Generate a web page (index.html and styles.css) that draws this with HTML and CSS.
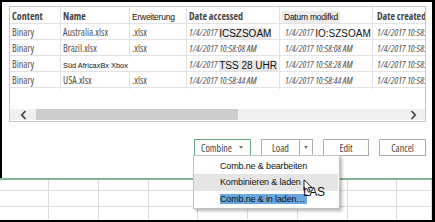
FILE: index.html
```html
<!DOCTYPE html>
<html>
<head>
<meta charset="utf-8">
<link rel="stylesheet" href="styles.css">
</head>
<body>
<div class="frame">
  <div class="dialog">
    <div class="box">
      <div class="row head">
        <div class="c">Content</div>
        <div class="c">Name</div>
        <div class="c"><span class="arial8">Erweiterung</span></div>
        <div class="c">Date accessed</div>
        <div class="c c5"><span class="arial8 hl">Datum modifkd</span></div>
        <div class="c c6">Date created</div>
      </div>
      <div class="row">
        <div class="c">Binary</div>
        <div class="c">Australia.xlsx</div>
        <div class="c">.xlsx</div>
        <div class="c it">1/4/2017 <span class="ov grey">ICSZSOAM</span></div>
        <div class="c c5 it">1/4/2017 <span class="ov">IO:SZSOAM</span></div>
        <div class="c c6 it">1/4/2017 10:58:00 AM</div>
      </div>
      <div class="row">
        <div class="c">Binary</div>
        <div class="c">Brazil.xlsx</div>
        <div class="c">.xlsx</div>
        <div class="c it">1/4/2017 10:58:08 AM</div>
        <div class="c c5 it">1/4/2017 10:58:08 AM</div>
        <div class="c c6 it">1/4/2017 10:58:08 AM</div>
      </div>
      <div class="row">
        <div class="c">Binary</div>
        <div class="c span2"><span class="arial7">Süd AfricaxBx Xbox</span></div>
        <div class="c it">1/4/2017 <span class="ov grey">TSS 28 UHR</span></div>
        <div class="c c5 it">1/4/2017 10:58:28 AM</div>
        <div class="c c6 it">1/4/2017 10:58:28 AM</div>
      </div>
      <div class="row">
        <div class="c">Binary</div>
        <div class="c">USA.xlsx</div>
        <div class="c">.xlsx</div>
        <div class="c it">1/4/2017 10:58:44 AM</div>
        <div class="c c5 it">1/4/2017 10:58:44 AM</div>
        <div class="c c6 it">1/4/2017 10:58:44 AM</div>
      </div>
      <div class="scroll">
        <div class="arrow-btn">
          <svg width="7" height="10" viewBox="0 0 7 10"><path d="M5.5 1 L1.8 5 L5.5 9" fill="none" stroke="#444" stroke-width="1.8"/></svg>
        </div>
        <div class="thumb"></div>
        <div class="arrow-btn right">
          <svg width="7" height="10" viewBox="0 0 7 10"><path d="M1.5 1 L5.2 5 L1.5 9" fill="none" stroke="#444" stroke-width="1.8"/></svg>
        </div>
      </div>
    </div>
    <div class="btns">
      <div class="btn combine"><span>Combine</span><span class="caret"></span></div>
      <div class="btn split">
        <div class="load-main">Load</div>
        <div class="load-drop"><span class="caret"></span></div>
      </div>
      <div class="btn edit">Edit</div>
      <div class="btn cancel">Cancel</div>
    </div>
  </div>
  <div class="sheet">
    <div class="srow r1"><div></div><div></div><div></div><div></div><div></div><div></div><div></div><div></div><div></div></div>
    <div class="srow r2"><div></div><div></div><div></div><div></div><div></div><div></div><div></div><div></div><div></div></div>
    <div class="srow r3"><div></div><div></div><div></div><div></div><div></div><div></div><div></div><div></div><div></div></div>
  </div>

  <div class="menu">
    <div class="mi">Comb.ne &amp; bearbeiten</div>
    <div class="mi hover">Kombinieren &amp; laden</div>
    <div class="mi"><span class="sel">Comb.ne &amp; in laden…</span></div>
  </div>
  <svg class="cursor" width="11" height="14" viewBox="0 0 11 14"><path d="M1 0.8 L1 11.5 L3.6 9.2 L5.5 13.2 L7.2 12.4 L5.4 8.6 L9 8.6 Z" fill="#fff" stroke="#000" stroke-width="0.9" stroke-linejoin="miter"/></svg>
  <div class="las">LAS</div>
</div>
</body>
</html>
```
FILE: styles.css
```css
html, body {
  margin: 0;
  padding: 0;
  background: #fff;
}

.frame {
  width: 435px;
  height: 222px;
  box-sizing: border-box;
  border-top: 2px solid #000;
  border-right: 3px solid #000;
  border-bottom: 2px solid #000;
  position: relative;
  overflow: hidden;
  background: #fff;
  display: flex;
  flex-direction: column;
}

.dialog {
  border-left: 2px solid #000;
  height: 176px;
  flex: none;
  box-sizing: border-box;
  padding: 4px 6px 0 7px;
}

.box {
  width: 417px;
  height: 116px;
  box-sizing: border-box;
  border: 1px solid #c6c6c6;
  display: flex;
  flex-direction: column;
  overflow: hidden;
  font-family: "Liberation Sans Narrow", "Open Sans", sans-serif;
  font-stretch: condensed;
  font-size: 10px;
  color: #525252;
}

.row {
  display: grid;
  grid-template-columns: 51px 69px 57px 93px 93px 80px;
  height: 16px;
  flex: none;
  box-sizing: border-box;
  border-bottom: 1px solid #e2e2e2;
  line-height: 17px;
}

.row.head {
  height: 17px;
  line-height: 18px;
  font-weight: bold;
  color: #454545;
}

.c {
  box-sizing: border-box;
  border-right: 1px solid #e2e2e2;
  padding-left: 2px;
  white-space: nowrap;
}

.c5 { padding-left: 5px; }
.c6 { padding-left: 4px; }
.span2 { grid-column: span 2; }

.it {
  font-style: italic;
  font-size: 9.6px;
  color: #4e4e4e;
}

.arial8 {
  font-family: "Liberation Sans", Arial, sans-serif;
  font-stretch: normal;
  font-weight: normal;
  font-size: 8.5px;
  letter-spacing: -0.25px;
  color: #111;
}

.arial8.hl {
  background: #ececec;
  padding: 1px 2px;
  margin-left: -3px;
}

.arial7 {
  font-family: "Liberation Sans", Arial, sans-serif;
  font-stretch: normal;
  font-size: 7.4px;
  color: #111;
}

.ov {
  font-family: "Liberation Sans", Arial, sans-serif;
  font-stretch: normal;
  font-style: normal;
  font-size: 10px;
  color: #111;
  position: relative;
  top: 1px;
  z-index: 1;
  background: #fff;
}

.ov.grey {
  background: #e8e8e8;
}

.scroll {
  margin-top: auto;
  margin-bottom: 1px;
  height: 11px;
  flex: none;
  background: #f0f0f0;
  display: flex;
  align-items: stretch;
}

.arrow-btn {
  width: 26px;
  display: flex;
  align-items: center;
  justify-content: center;
}

.arrow-btn.right {
  margin-left: auto;
  width: 24px;
}

.thumb {
  width: 202px;
  background: #cdcdcd;
}

.btns {
  display: flex;
  justify-content: flex-end;
  gap: 10px;
  margin-top: 17px;
  width: 417px;
  font-family: "Liberation Sans Narrow", "Open Sans", sans-serif;
  font-stretch: condensed;
  font-size: 10px;
  color: #444;
}

.btn {
  height: 17px;
  box-sizing: border-box;
  border: 1px solid #adadad;
  background: #fff;
  display: flex;
  align-items: center;
  justify-content: center;
}

.combine {
  width: 57px;
  border-color: #66a781;
  justify-content: flex-start;
  padding-left: 6px;
  gap: 7px;
}

.caret {
  width: 0;
  height: 0;
  border-left: 2px solid transparent;
  border-right: 2px solid transparent;
  border-top: 3px solid #777;
}

.split {
  width: 52px;
  justify-content: flex-start;
  align-items: stretch;
}

.load-main {
  width: 37px;
  display: flex;
  align-items: center;
  justify-content: center;
  border-right: 1px solid #adadad;
}

.load-drop {
  flex: 1;
  display: flex;
  align-items: center;
  justify-content: center;
}

.edit { width: 46px; }
.cancel { width: 47px; }

.sheet {
  flex: 1;
  border-top: 2px solid #7db995;
}

.srow {
  display: grid;
  grid-template-columns: 49px 50px 50px 49px 50px 50px 50px 49px 1fr;
  box-sizing: border-box;
  border-bottom: 1px solid #dcdcdc;
}

.srow > div {
  border-right: 1px solid #dcdcdc;
}

.srow.r1 { height: 11px; }
.srow.r2 { height: 16px; }
.srow.r3 { height: 16px; border-bottom: none; }

.menu {
  position: absolute;
  left: 193px;
  top: 153px;
  width: 147px;
  height: 54px;
  box-sizing: border-box;
  border: 1px solid #c4c4c4;
  background: #fff;
  box-shadow: 2px 2px 3px rgba(0, 0, 0, 0.28);
  padding-top: 2px;
  font-family: "Liberation Sans", Arial, sans-serif;
  font-size: 9px;
  letter-spacing: -0.15px;
  color: #111;
  z-index: 5;
}

.mi {
  height: 16px;
  line-height: 16px;
  padding-left: 26px;
  white-space: nowrap;
}

.mi.hover {
  height: 17px;
  line-height: 17px;
  background: #e5e5e5;
  margin-right: 1px;
}

.sel {
  background: #6aa7e0;
  display: inline-block;
  line-height: 10px;
  padding-right: 2px;
}

.cursor {
  position: absolute;
  left: 303px;
  top: 177px;
  z-index: 6;
}

.las {
  position: absolute;
  left: 303px;
  top: 184px;
  font-family: "Liberation Sans", Arial, sans-serif;
  font-size: 12px;
  line-height: 12px;
  letter-spacing: -0.4px;
  color: #111;
  z-index: 6;
}
```
